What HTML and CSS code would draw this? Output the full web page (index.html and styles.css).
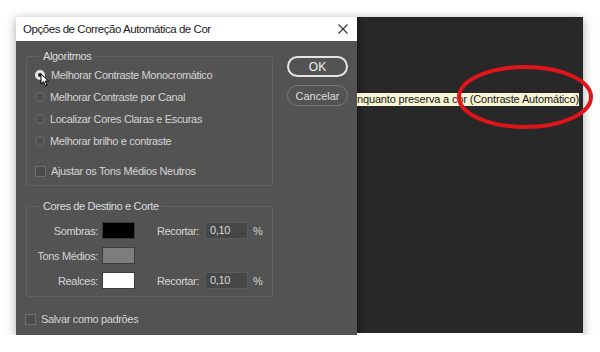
FILE: index.html
```html
<!DOCTYPE html>
<html lang="pt">
<head>
    <meta charset="UTF-8">
    <title>Opções de Correção Automática de Cor</title>
    <link rel="stylesheet" href="styles.css">
</head>
<body>
  <div class="shot">
    <div class="dialog">
        <div class="titlebar">
            <span>Opções de Correção Automática de Cor</span>
            <svg class="close" width="10" height="10" viewBox="0 0 10 10"><path d="M0.5 0.5 L9.5 9.5 M9.5 0.5 L0.5 9.5" stroke="#333" stroke-width="1.1"/></svg>
        </div>
        <div class="body">
            <div class="left">
                <fieldset class="group algo">
                    <legend>Algoritmos</legend>
                    <div class="opt"><span class="radio on"></span>Melhorar Contraste Monocromático
                        <!-- mouse cursor over first radio -->
                        <svg class="cursor" width="10" height="14" viewBox="0 0 10 14"><path d="M1 1 L1 11 L3.5 8.6 L5.4 13 L7 12.3 L5.2 8 L8.6 8 Z" fill="#fff" stroke="#000" stroke-width="1"/></svg>
                    </div>
                    <div class="opt"><span class="radio"></span>Melhorar Contraste por Canal</div>
                    <div class="opt"><span class="radio"></span>Localizar Cores Claras e Escuras</div>
                    <div class="opt"><span class="radio"></span>Melhorar brilho e contraste</div>
                    <div class="opt check-row"><span class="check"></span>Ajustar os Tons Médios Neutros</div>
                </fieldset>

                <fieldset class="group targets">
                    <legend>Cores de Destino e Corte</legend>
                    <div class="grid">
                        <span class="lbl">Sombras:</span>
                        <span class="swatch black"></span>
                        <span class="lbl clip">Recortar:</span>
                        <span class="field">0,10</span>
                        <span class="pct">%</span>

                        <span class="lbl">Tons Médios:</span>
                        <span class="swatch gray"></span>
                        <span></span><span></span><span></span>

                        <span class="lbl">Realces:</span>
                        <span class="swatch white"></span>
                        <span class="lbl clip">Recortar:</span>
                        <span class="field">0,10</span>
                        <span class="pct">%</span>
                    </div>
                </fieldset>

                <div class="opt save"><span class="check"></span>Salvar como padrões</div>
            </div>
            <div class="buttons">
                <button class="btn ok">OK</button>
                <button class="btn">Cancelar</button>
            </div>
        </div>
    </div>
    <div class="canvas">
        <div class="tooltip">nquanto preserva a cor (Contraste Automático)</div>
        <svg class="mark" width="140" height="68" viewBox="0 0 140 68"><ellipse cx="70" cy="34" rx="66" ry="30" fill="none" stroke="#e01419" stroke-width="4"/></svg>
    </div>
  </div>
</body>
</html>
```

FILE: styles.css
```css
body {
    margin: 0;
    background: #ffffff;
    font-family: "Liberation Sans", Arial, sans-serif;
}
.shot {
    display: flex;
    width: 567px;
    height: 318px;
    margin: 17px 0 0 16px;
    box-shadow: 0 2px 10px rgba(0, 0, 0, 0.35);
}
.dialog {
    width: 341px;
    background: #535353;
    display: flex;
    flex-direction: column;
}
.titlebar {
    height: 24px;
    background: #ffffff;
    display: flex;
    align-items: center;
    justify-content: space-between;
    padding: 0 9px 0 7px;
    font-size: 11.5px;
    letter-spacing: -0.45px;
    color: #1a1a1a;
}
.body {
    flex: 1;
    display: flex;
    padding: 9px 9px 0 10px;
    color: #d4d4d4;
    font-size: 11px;
    letter-spacing: -0.35px;
    white-space: nowrap;
}
.left {
    width: 247px;
}
.group {
    margin: 0;
    padding: 0 0 0 8px;
    border: 1px solid #626262;
    border-radius: 2px;
}
.group legend {
    padding: 0 3px;
    margin-left: 5px;
    font-size: 11px;
    line-height: 13px;
    color: #dcdcdc;
}
.algo {
    padding-top: 1px;
    padding-bottom: 3px;
}
.opt {
    position: relative;
    display: flex;
    align-items: center;
    height: 22px;
}
.radio {
    width: 8px;
    height: 8px;
    border-radius: 50%;
    background: #4e4e4e;
    border: 1.5px solid #6e6e6e;
    margin-right: 5px;
    flex-shrink: 0;
}
.radio.on {
    background: #1f1f1f;
    border: 3px solid #e8e8e8;
    width: 4px;
    height: 4px;
    margin-right: 6px;
}
.cursor {
    position: absolute;
    left: 5px;
    top: 9px;
}
.check {
    width: 9px;
    height: 9px;
    background: #4b4b4b;
    border: 1px solid #6e6e6e;
    margin-right: 5px;
    flex-shrink: 0;
}
.check-row {
    margin-top: 8px;
}
.targets {
    margin-top: 14px;
    padding-top: 9px;
    padding-bottom: 7px;
}
.grid {
    display: grid;
    grid-template-columns: 63px 33px 62px 43px 12px;
    grid-auto-rows: 17px;
    row-gap: 8px;
    column-gap: 4px;
    align-items: center;
}
.lbl {
    text-align: right;
}
.lbl.clip {
    padding-right: 2px;
}
.swatch {
    height: 15px;
    border: 1px solid #3b3b3b;
}
.swatch.black { background: #000000; }
.swatch.gray { background: #7d7d7d; }
.swatch.white { background: #ffffff; }
.field {
    height: 15px;
    line-height: 15px;
    padding-left: 4px;
    background: #464646;
    border: 1px solid #5c5c5c;
    color: #d8d8d8;
}
.pct {
    padding-left: 1px;
}
.save {
    margin-top: 11px;
    margin-left: -1px;
}
.buttons {
    display: flex;
    flex-direction: column;
    gap: 8px;
    margin: 6px 0 0 14px;
}
.btn {
    width: 61px;
    height: 21px;
    border-radius: 11px;
    background: #535353;
    border: 1px solid #7a7a7a;
    color: #dedede;
    font-family: "Liberation Sans", Arial, sans-serif;
    font-size: 11px;
    padding: 0;
}
.btn.ok {
    border: 2px solid #e4e4e4;
    color: #f0f0f0;
    font-size: 12px;
}
.canvas {
    position: relative;
    flex: 1;
    height: 316px;
    background: #282828;
    box-shadow: inset 6px 0 6px -4px rgba(0, 0, 0, 0.4);
}
.tooltip {
    position: absolute;
    left: 0;
    top: 76px;
    width: 222px;
    height: 13px;
    line-height: 13px;
    background: #f7f5d3;
    color: #151515;
    font-size: 11px;
    letter-spacing: -0.15px;
    white-space: nowrap;
    overflow: hidden;
}
.mark {
    position: absolute;
    left: 98px;
    top: 46px;
}
```
